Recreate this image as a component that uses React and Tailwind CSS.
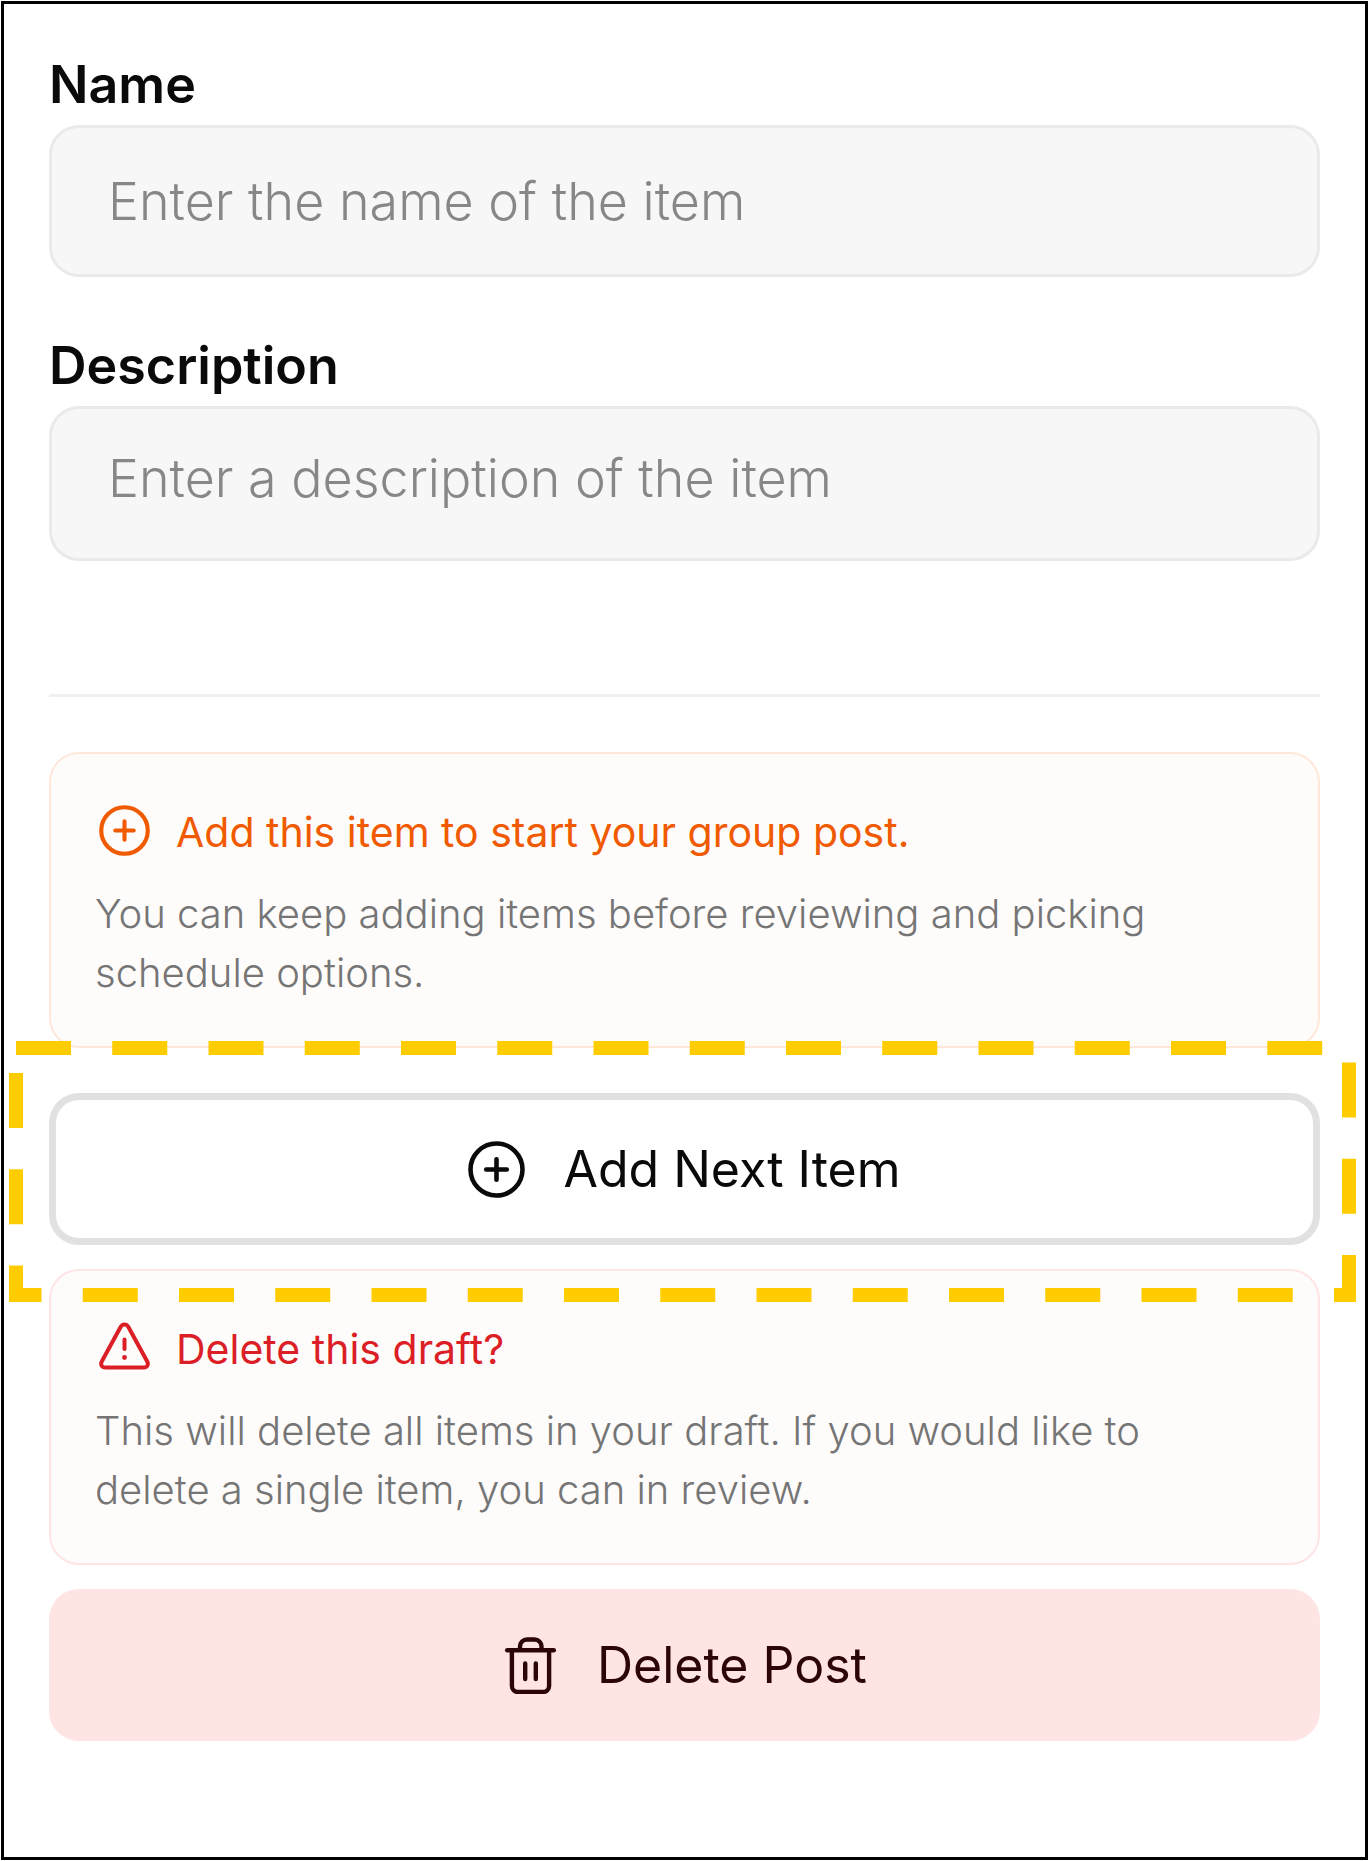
import { useState } from "react";

function PlusCircleIcon({ className }) {
  return (
    <svg
      aria-hidden="true"
      viewBox="0 0 57 57"
      className={className}
      fill="none"
      stroke="currentColor"
      strokeWidth="4.6"
      strokeLinecap="round"
      strokeLinejoin="round"
    >
      <circle cx="28.5" cy="28.5" r="26" />
      <path d="M28.5 18.2v20.6M18.2 28.5h20.6" />
    </svg>
  );
}

function WarningIcon({ className }) {
  return (
    <svg
      aria-hidden="true"
      viewBox="0 0 51 51"
      className={className}
      fill="none"
      stroke="currentColor"
      strokeWidth="4"
      strokeLinecap="round"
      strokeLinejoin="round"
    >
      <path d="M21.6 5 2.9 39.2C1 42.8 3 45.5 6.5 45.5h38c3.5 0 5.5-2.7 3.6-6.3L29.4 5C27.4 1.8 23.6 1.8 21.6 5Z" />
      <path d="M25.5 17.5v9.5" />
      <circle cx="25.5" cy="35.5" r="2.4" fill="currentColor" stroke="none" />
    </svg>
  );
}

function TrashIcon({ className }) {
  return (
    <svg
      aria-hidden="true"
      viewBox="0 0 57 57"
      className={className}
      fill="none"
      stroke="currentColor"
      strokeWidth="4.4"
      strokeLinecap="round"
      strokeLinejoin="round"
    >
      <path d="M5.2 13.2h46.6" />
      <path d="M18 12.8V9.5a7 7 0 0 1 7-7h7.5a7 7 0 0 1 7 7v3.3" />
      <path d="M9.9 13.5v35.5a6 6 0 0 0 6 6h25.2a6 6 0 0 0 6-6V13.5" />
      <path d="M23.2 26.5v15.5M33.8 26.5v15.5" />
    </svg>
  );
}

function NoticeCard({ icon, title, children, borderClass, titleClass }) {
  return (
    <section
      className={`rounded-[30px] border-2 bg-[#FEFCFB] pt-12 pr-16 pb-11 pl-11 ${borderClass}`}
    >
      <h2
        className={`flex items-center gap-[26px] pl-1 text-[41px] leading-[60px] font-normal ${titleClass}`}
      >
        {icon}
        {title}
      </h2>
      <p className="mt-[22px] text-[40px] leading-[59px] font-light text-[#757575]">
        {children}
      </p>
    </section>
  );
}

function App() {
  const [item, setItem] = useState({ name: "", description: "" });

  function handleChange(event) {
    const { name, value } = event.target;

    setItem((prev) => ({
      ...prev,
      [name]: value,
    }));
  }

  const labelClass =
    "block text-[52px] leading-[60px] font-semibold text-[#0A0A0A]";
  const fieldClass =
    "mt-[10px] block w-full resize-none overflow-hidden rounded-[30px] border-3 border-[#EAEAEA] bg-[#F7F7F7] px-14 text-[52px] leading-[60px] font-light text-[#0A0A0A] outline-none placeholder:text-[#878787] placeholder:opacity-100";
  const buttonClass =
    "flex h-[152px] w-full cursor-pointer items-center justify-center gap-[38px] rounded-[30px] text-[50px] leading-[60px] font-normal";

  return (
    <div className="flex min-h-screen flex-col p-px font-['Inter',sans-serif]">
      <main className="flex-1 border-3 border-black bg-white px-[45px] pt-[51px] pb-24">
        <form onSubmit={(event) => event.preventDefault()}>
          <label htmlFor="name" className={labelClass}>
            Name
          </label>
          <input
            id="name"
            name="name"
            type="text"
            value={item.name}
            onChange={handleChange}
            placeholder="Enter the name of the item"
            className={`h-[152px] ${fieldClass}`}
          />

          <label htmlFor="description" className={`mt-[59px] ${labelClass}`}>
            Description
          </label>
          <textarea
            id="description"
            name="description"
            rows={1}
            value={item.description}
            onChange={handleChange}
            placeholder="Enter a description of the item"
            className={`h-[155px] py-10 ${fieldClass}`}
          />

          <hr className="mt-[133px] mb-[55px] border-t-3 border-[#F0F0F0]" />

          <NoticeCard
            icon={<PlusCircleIcon className="mb-1 size-[51px] shrink-0" />}
            title="Add this item to start your group post."
            borderClass="border-[#FFE8D9]"
            titleClass="text-[#F05A00]"
          >
            You can keep adding items before reviewing and picking schedule
            options.
          </NoticeCard>

          <div className="relative mt-[45px] mb-6">
            <button
              type="submit"
              className={`border-7 border-[#E1E1E1] bg-white text-[#0A0A0A] ${buttonClass}`}
            >
              <PlusCircleIcon className="size-[57px] shrink-0" />
              Add Next Item
            </button>

            {/* Dashed highlight around the next step */}
            <div className="pointer-events-none absolute -top-[45px] -right-[29px] -bottom-[50px] -left-[33px]">
              <svg aria-hidden="true" className="size-full overflow-visible">
                <rect
                  width="100%"
                  height="100%"
                  fill="none"
                  stroke="#FFCC00"
                  strokeWidth="14"
                  strokeDasharray="55 41.25"
                />
              </svg>
            </div>
          </div>

          <NoticeCard
            icon={<WarningIcon className="mb-1 size-[51px] shrink-0" />}
            title="Delete this draft?"
            borderClass="border-[#FFE4E4]"
            titleClass="text-[#DC1F26]"
          >
            This will delete all items in your draft. If you would like to
            delete a single item, you can in review.
          </NoticeCard>

          <button
            type="button"
            className={`mt-6 bg-[#FFE4E4] text-[#2B0508] ${buttonClass}`}
          >
            <TrashIcon className="size-[57px] shrink-0" />
            Delete Post
          </button>
        </form>
      </main>
    </div>
  );
}

export default App;
